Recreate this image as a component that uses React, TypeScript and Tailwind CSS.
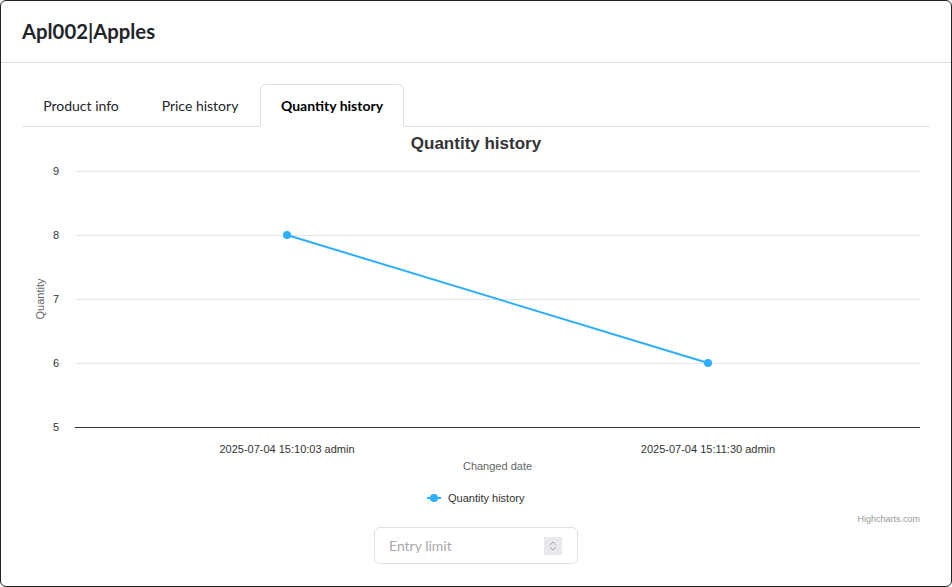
import { ChevronsUpDown } from "lucide-react"

const grid = [
  { v: 9, y: 44 },
  { v: 8, y: 108 },
  { v: 7, y: 172 },
  { v: 6, y: 236 },
]

function QuantityChart() {
  return (
    <svg width="908" height="400" className="block" style={{ fontFamily: '"Liberation Sans", Arial, sans-serif' }}>
      <text x="454" y="22" textAnchor="middle" fontSize="17" fontWeight="bold" fill="#333333">Quantity history</text>
      {grid.map((g) => (
        <g key={g.v}>
          <line x1="53" x2="898" y1={g.y + 0.5} y2={g.y + 0.5} stroke="#e6e6e6" strokeWidth="1" />
          <text x="37" y={g.y + 4} textAnchor="end" fontSize="11" fill="#333333">{g.v}</text>
        </g>
      ))}
      <line x1="53" x2="898" y1="300.5" y2="300.5" stroke="#333333" strokeWidth="1" />
      <text x="37" y="304" textAnchor="end" fontSize="11" fill="#333333">5</text>
      <text x="18" y="172" textAnchor="middle" fontSize="11" fill="#666666" transform="rotate(-90 18 172)" dy="4">Quantity</text>
      <polyline points="265,108 686,236" fill="none" stroke="#2caffe" strokeWidth="2" />
      <circle cx="265" cy="108" r="4" fill="#2caffe" />
      <circle cx="686" cy="236" r="4" fill="#2caffe" />
      <text x="265" y="326" textAnchor="middle" fontSize="11" fill="#333333">2025-07-04 15:10:03 admin</text>
      <text x="686" y="326" textAnchor="middle" fontSize="11" fill="#333333">2025-07-04 15:11:30 admin</text>
      <text x="475.5" y="343" textAnchor="middle" fontSize="11" fill="#666666">Changed date</text>
      <line x1="405" x2="419" y1="371" y2="371" stroke="#2caffe" strokeWidth="2" />
      <circle cx="412" cy="371" r="4" fill="#2caffe" />
      <text x="426" y="375" fontSize="11" fill="#333333">Quantity history</text>
      <text x="898" y="395" textAnchor="end" fontSize="9" fill="#999999">Highcharts.com</text>
    </svg>
  )
}

export default function App() {
  return (
    <div className="w-[952px] h-[587px] bg-white">
      <div className="w-full h-full border border-[#222] rounded-md overflow-hidden bg-white flex flex-col font-['Lato',sans-serif] text-[#212529]">
        <div className="h-[62px] shrink-0 px-[21px] flex items-center border-b border-[#dee2e6]">
          <h1 className="text-[20.3px] font-bold leading-none text-[#212529]">Apl002|Apples</h1>
        </div>
        <div className="px-[21px] pt-[21px] flex flex-col">
          <div className="h-[43px] flex border-b border-[#dee2e6] text-[14px]">
            <button className="w-[118px] -mb-px border border-transparent text-[#212529]">Product info</button>
            <button className="w-[120px] -mb-px border border-transparent text-[#212529]">Price history</button>
            <button className="w-[144px] -mb-px border border-[#dee2e6] border-b-white bg-white rounded-t-md font-bold text-[#000]">Quantity history</button>
          </div>
          <QuantityChart />
          <div className="flex justify-center">
            <div className="w-[204px] h-[37px] border border-[#dee2e6] rounded-md flex items-center pl-[14px] pr-[15px]">
              <span className="flex-1 text-[14px] text-[#aaa]">Entry limit</span>
              <span className="w-[18px] h-[18px] bg-[#e9e9ed] flex items-center justify-center text-[#777]">
                <ChevronsUpDown size={12} strokeWidth={1.25} />
              </span>
            </div>
          </div>
        </div>
      </div>
    </div>
  )
}
